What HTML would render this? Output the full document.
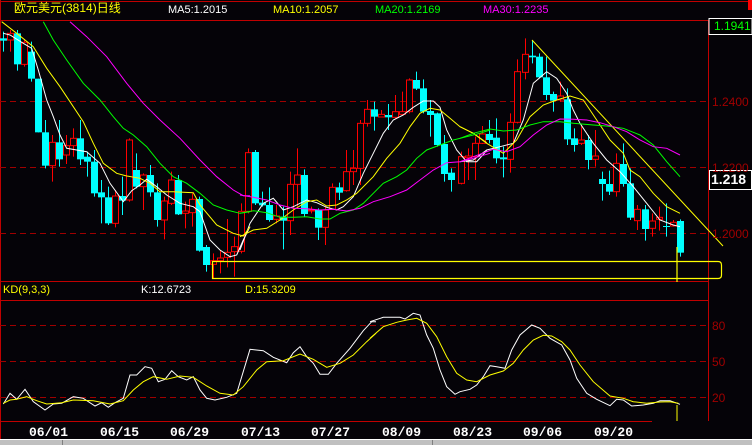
<!DOCTYPE html>
<html><head><meta charset="utf-8">
<style>
html,body{margin:0;padding:0;background:#000;}
body{width:752px;height:445px;overflow:hidden;position:relative;font-family:"Liberation Sans","Noto Sans CJK SC",sans-serif;}
svg{position:absolute;left:0;top:0;}
.t{position:absolute;font-size:11px;line-height:12px;white-space:nowrap;}
.d{position:absolute;top:425px;font-family:"Liberation Mono",monospace;font-weight:bold;font-size:13px;color:#fff;letter-spacing:0px;}
.ax{position:absolute;font-size:12px;color:#a00000;left:712px;}
</style></head><body>
<svg id="s" width="752" height="445" xmlns="http://www.w3.org/2000/svg">
<rect width="752" height="445" fill="#050308"/>
<g stroke="#c00000" stroke-width="1" fill="none">
<line x1="0" y1="1.5" x2="752" y2="1.5"/>
<line x1="0" y1="20.5" x2="752" y2="20.5"/>
<line x1="0.5" y1="0" x2="0.5" y2="440"/>
<line x1="708.5" y1="20" x2="708.5" y2="421"/>
<line x1="0" y1="281.5" x2="708" y2="281.5"/>
<line x1="0" y1="300.5" x2="708" y2="300.5"/>
<line x1="0" y1="421.5" x2="652" y2="421.5"/>
</g>
<rect x="748" y="0" width="4" height="10" fill="#ff0000"/>
<g stroke="#a00000" stroke-dasharray="6,4" stroke-width="1">
<line x1="0" y1="101.5" x2="708" y2="101.5"/>
<line x1="0" y1="167.5" x2="708" y2="167.5"/>
<line x1="0" y1="233.5" x2="708" y2="233.5"/>
<line x1="0" y1="325.5" x2="708" y2="325.5"/>
<line x1="0" y1="361.5" x2="708" y2="361.5"/>
<line x1="0" y1="397.5" x2="708" y2="397.5"/>
</g>
<g id="c"></g>
<g id="l" fill="none" stroke-width="1"></g>
<path d="M212.5 261.5 H718 Q721.5 261.5 721.5 265 V275 Q721.5 278.5 718 278.5 H212.5 Z" fill="none" stroke="#ffff00" stroke-width="1.2"/>
<line x1="677" y1="247" x2="677" y2="282" stroke="#ffff00" stroke-width="1.2"/>
<rect x="709" y="18.5" width="43" height="16" fill="#000" stroke="#fff"/>
<rect x="709.5" y="170.5" width="42" height="19" fill="#000" stroke="#fff"/>
<rect x="0" y="439" width="752" height="6" fill="#c0c0c0"/>
<line x1="0" y1="439.5" x2="752" y2="439.5" stroke="#fff"/>
<line x1="62.5" y1="440" x2="62.5" y2="445" stroke="#808080"/>
<line x1="432.5" y1="440" x2="432.5" y2="445" stroke="#808080"/>
</svg>
<div class="t" style="left:14px;top:2px;color:#ffff00;font-size:12px;">欧元美元(3814)日线</div>
<div class="t" style="left:168px;top:4px;color:#fff;">MA5:1.2015</div>
<div class="t" style="left:273px;top:4px;color:#ffff00;">MA10:1.2057</div>
<div class="t" style="left:375px;top:4px;color:#00ff00;">MA20:1.2169</div>
<div class="t" style="left:483px;top:4px;color:#ff00ff;">MA30:1.2235</div>
<div class="t" style="left:3px;top:284px;color:#ffff00;">KD(9,3,3)</div>
<div class="t" style="left:141px;top:284px;color:#fff;">K:12.6723</div>
<div class="t" style="left:245px;top:284px;color:#ffff00;">D:15.3209</div>
<div class="t" style="left:714px;top:20px;color:#00ff00;font-size:12px;">1.1941</div>
<div class="t" style="left:711px;top:172px;color:#fff;font-size:14px;font-weight:bold;line-height:15px;">1.218</div>
<div class="ax" style="top:95px;">1.2400</div>
<div class="ax" style="top:161px;">1.2200</div>
<div class="ax" style="top:227px;">1.2000</div>
<div class="ax" style="top:319px;">80</div>
<div class="ax" style="top:355px;">50</div>
<div class="ax" style="top:391px;">20</div>
<div class="d" style="left:29px;">06/01</div>
<div class="d" style="left:100px;">06/15</div>
<div class="d" style="left:170px;">06/29</div>
<div class="d" style="left:241px;">07/13</div>
<div class="d" style="left:311px;">07/27</div>
<div class="d" style="left:382px;">08/09</div>
<div class="d" style="left:453px;">08/23</div>
<div class="d" style="left:523px;">09/06</div>
<div class="d" style="left:594px;">09/20</div>
<script>
var NS="http://www.w3.org/2000/svg";
function el(p,t,a){var e=document.createElementNS(NS,t);for(var k in a)e.setAttribute(k,a[k]);p.appendChild(e);return e;}
var C=document.getElementById('c'),L=document.getElementById('l');
var groups=[
[0,20,[[8,'c',55,62,35,95],[29,'r',40,60,30,95],[50,'c',40,133,30,152],[71,'r',67,133,58,140],[92,'c',95,176,65,185],[113,'c',176,337,176,337],[134,'c',337,437,300,445],[155,'r',367,437,345,485],[176,'c',367,418,300,440],[197,'r',377,405,345,432],[218,'r',355,377,325,410],[239,'c',355,418,300,435],[260,'c',410,425,395,470],[281,'c',425,520,390,530],[302,'c',517,532,480,610],[323,'c',532,610,500,615],[344,'r',528,610,510,622],[365,'c',528,542,470,585],[386,'r',360,540,355,545],[407,'c',450,500,400,505],[428,'r',465,500,460,570],[449,'c',465,517,435,530],[470,'c',517,600,490,620],[491,'r',543,600,530,658],[512,'r',480,550,455,555],[533,'c',480,583,465,585],[554,'r',573,580,545,625],[575,'r',538,578,520,620],[596,'c',537,692,530,695],[617,'c',681,735,675,755],[638,'r',722,733,700,775],[659,'r',714,722,690,760],[680,'r',697,712,597,742],[701,'r',680,695,650,770],[722,'r',574,694,550,700]]],
[240,20,[[23,'r',398,574,385,580],[44,'c',396,550,390,555],[65,'c',548,556,515,560],[86,'c',555,600,502,605],[107,'r',588,598,555,610],[128,'c',590,602,560,688],[149,'r',493,602,455,645],[170,'r',465,493,385,560],[191,'c',465,582,448,590],[212,'r',570,573,560,580],[233,'c',570,623,565,660],[254,'r',570,622,560,675],[275,'r',502,568,490,570],[296,'c',502,518,488,540],[317,'r',455,512,390,515],[338,'r',445,455,390,495],[359,'r',310,445,300,495],[380,'r',268,310,240,320],[401,'c',268,290,245,332],[422,'r',283,291,270,292],[443,'c',285,292,252,330],[464,'r',275,292,225,295],[485,'r',275,283,215,285],[506,'r',180,275,175,280],[527,'c',180,206,155,210],[548,'c',205,275,178,280],[569,'c',273,285,240,350],[590,'c',280,375,278,380],[611,'c',372,462,345,485],[632,'c',458,480,445,515]]],
[460,20,[[4,'r',410,490,395,493],[25,'r',408,413,385,480],[46,'r',370,410,350,480],[67,'r',342,370,318,372],[88,'c',342,360,300,370],[109,'c',353,415,295,430],[130,'c',412,418,380,472],[151,'r',307,418,280,458],[172,'r',155,307,118,310],[196,'r',103,157,55,178],[217,'c',107,112,60,130],[238,'c',110,172,100,175],[259,'c',172,225,110,240],[280,'c',222,242,215,275],[301,'r',228,240,185,245],[322,'c',238,358,205,375],[343,'c',355,375,325,395],[364,'r',360,370,318,375],[385,'c',360,420,345,448],[406,'r',408,418,330,440],[427,'c',477,492,455,542],[448,'c',492,515,452,525],[469,'r',430,515,400,530],[490,'c',432,492,370,500],[511,'c',490,593,445,600],[532,'r',568,602,555,630],[556,'c',568,627,555,662],[577,'r',603,625,580,650],[598,'r',592,598,560,632],[619,'c',618,621,550,650],[640,'r',607,618,600,620],[661,'c',603,698,598,710]]]
];
groups.forEach(function(g){var ox=g[0],oy=g[1];g[2].forEach(function(k){
 var x=Math.round(ox+k[0]/3),bt=oy+k[2]/3,bb=oy+k[3]/3,hi=oy+k[4]/3,lo=oy+k[5]/3;
 var col=k[1]=='r'?'#ff0000':'#00ffff';
 el(C,'line',{x1:x+0.5,x2:x+0.5,y1:hi,y2:lo,stroke:col});
 var h=Math.max(1,bb-bt);
 if(k[1]=='r') el(C,'rect',{x:x-2.5,y:bt,width:6,height:h,fill:'#050308',stroke:col});
 else el(C,'rect',{x:x-3,y:bt,width:7,height:h,fill:col});
});});
function pl(ox,oy,pts,col){var s=[];for(var i=0;i<pts.length;i+=2)s.push((ox+pts[i]/3).toFixed(1)+','+(oy+pts[i+1]/3).toFixed(1));el(L,'polyline',{points:s.join(' '),stroke:col});}
// MA5
pl(0,20,[10,40,30,45,70,70,95,85,115,150,140,240,160,290,180,345,200,385,260,395,300,430,330,490,370,545,395,512,420,495,440,478,470,500,500,525,540,550,580,560,600,575,630,660,660,690,690,710,710,705,730,660,750,620],'#fff');
pl(240,20,[0,690,30,610,70,550,100,535,130,570,160,560,200,540,230,548,260,562,290,570,310,560,340,530,370,460,400,400,430,340,460,300,490,285,520,262,550,243,580,243,600,262,620,330,650,390,680,425,710,425,740,392],'#fff');
pl(460,20,[0,425,40,420,80,390,120,380,160,370,190,300,220,190,260,155,290,175,320,220,340,270,360,310,400,370,440,420,480,455,520,500,560,550,600,600,640,615,660,620],'#fff');
// MA10
pl(0,20,[5,5,50,40,100,80,140,145,180,200,220,260,250,305,280,370,310,430,350,460,380,468,420,475,450,490,480,515,520,515,580,518,600,555,650,615,700,640,730,648,750,620],'#ffff00');
pl(240,20,[0,650,40,630,80,625,120,600,160,570,200,545,230,540,260,558,290,555,320,540,350,520,400,470,440,415,480,370,510,320,540,280,570,265,600,270,630,295,660,320,700,340,740,368],'#ffff00');
pl(460,20,[0,320,40,340,80,370,130,400,170,360,210,290,250,255,290,240,330,228,370,240,410,300,450,360,490,400,510,450,540,470,580,520,620,560,660,580],'#ffff00');
el(L,'line',{x1:532,y1:40,x2:723,y2:246,stroke:'#ffff00'});
// MA20
pl(0,20,[130,5,160,60,200,120,250,190,300,240,340,290,370,325,400,345,440,380,480,430,520,470,560,490,600,520,640,555,680,570,720,580,750,575],'#00ff00');
pl(240,20,[0,580,40,572,80,578,120,592,160,592,200,590,240,597,270,597,300,580,340,570,370,550,400,520,430,490,470,470,500,450,530,415,560,390,600,375,640,360,680,350,720,340,750,330],'#00ff00');
pl(460,20,[0,355,40,340,90,327,130,333,170,330,210,315,250,305,300,305,340,310,400,315,440,318,490,325,540,345,580,375,620,425,660,470],'#00ff00');
// MA30
pl(0,20,[210,5,260,50,320,110,380,190,430,250,480,300,540,355,600,420,650,470,700,510,730,527,750,527],'#ff00ff');
pl(240,20,[0,525,40,532,80,540,120,555,160,565,200,566,240,570,280,568,320,573,360,565,400,545,450,530,500,510,540,480,580,450,620,428,660,425,700,415,750,400],'#ff00ff');
pl(460,20,[0,425,40,410,100,388,140,395,180,380,220,345,260,315,300,297,340,298,380,300,420,308,460,320,500,335,540,360,580,380,620,385,660,405],'#ff00ff');
// KD
pl(0,280,[10,372,30,340,50,358,75,328,100,365,135,390,160,372,185,370,220,350,250,355,285,378,305,368,325,382,345,368,370,355,390,285,410,285,435,260,455,265,475,305,495,298,515,272,535,290,560,300,580,290,600,330,620,355,645,360,680,352,710,340,750,208,790,212,820,232,860,248,880,218,900,200,920,230,940,250,960,283,985,283,1010,250,1050,205,1090,152,1115,125,1128,125],'#fff');
pl(0,280,[10,370,30,360,50,358,80,350,110,362,140,372,185,368,220,360,280,362,330,372,370,362,400,330,430,305,460,290,500,298,540,288,580,292,620,318,660,340,700,345,730,320,770,270,800,245,850,242,900,222,940,238,980,262,1020,250,1060,225,1100,185,1128,160],'#ffff00');
pl(370,290,[0,95,40,82,90,82,105,87,130,70,150,75,170,135,190,175,210,240,230,290,255,313,270,305,300,298,320,285,340,260,360,227,380,230,405,235,425,180,450,135,485,105,510,115,540,145,575,165,600,210,620,265,650,310,680,328,720,347,740,328,760,330,785,348,820,345,850,340,870,332,900,332,930,343],'#fff');
pl(370,290,[0,145,40,110,80,97,110,90,140,85,170,100,200,140,230,200,260,250,290,270,320,275,360,255,400,243,430,220,460,180,490,150,520,136,545,138,575,155,600,180,630,225,670,275,720,318,760,325,790,335,830,340,870,336,900,335,925,340],'#ffff00');
el(L,'line',{x1:677,y1:405,x2:677,y2:421,stroke:'#ffff00'});
</script>
</body></html>
